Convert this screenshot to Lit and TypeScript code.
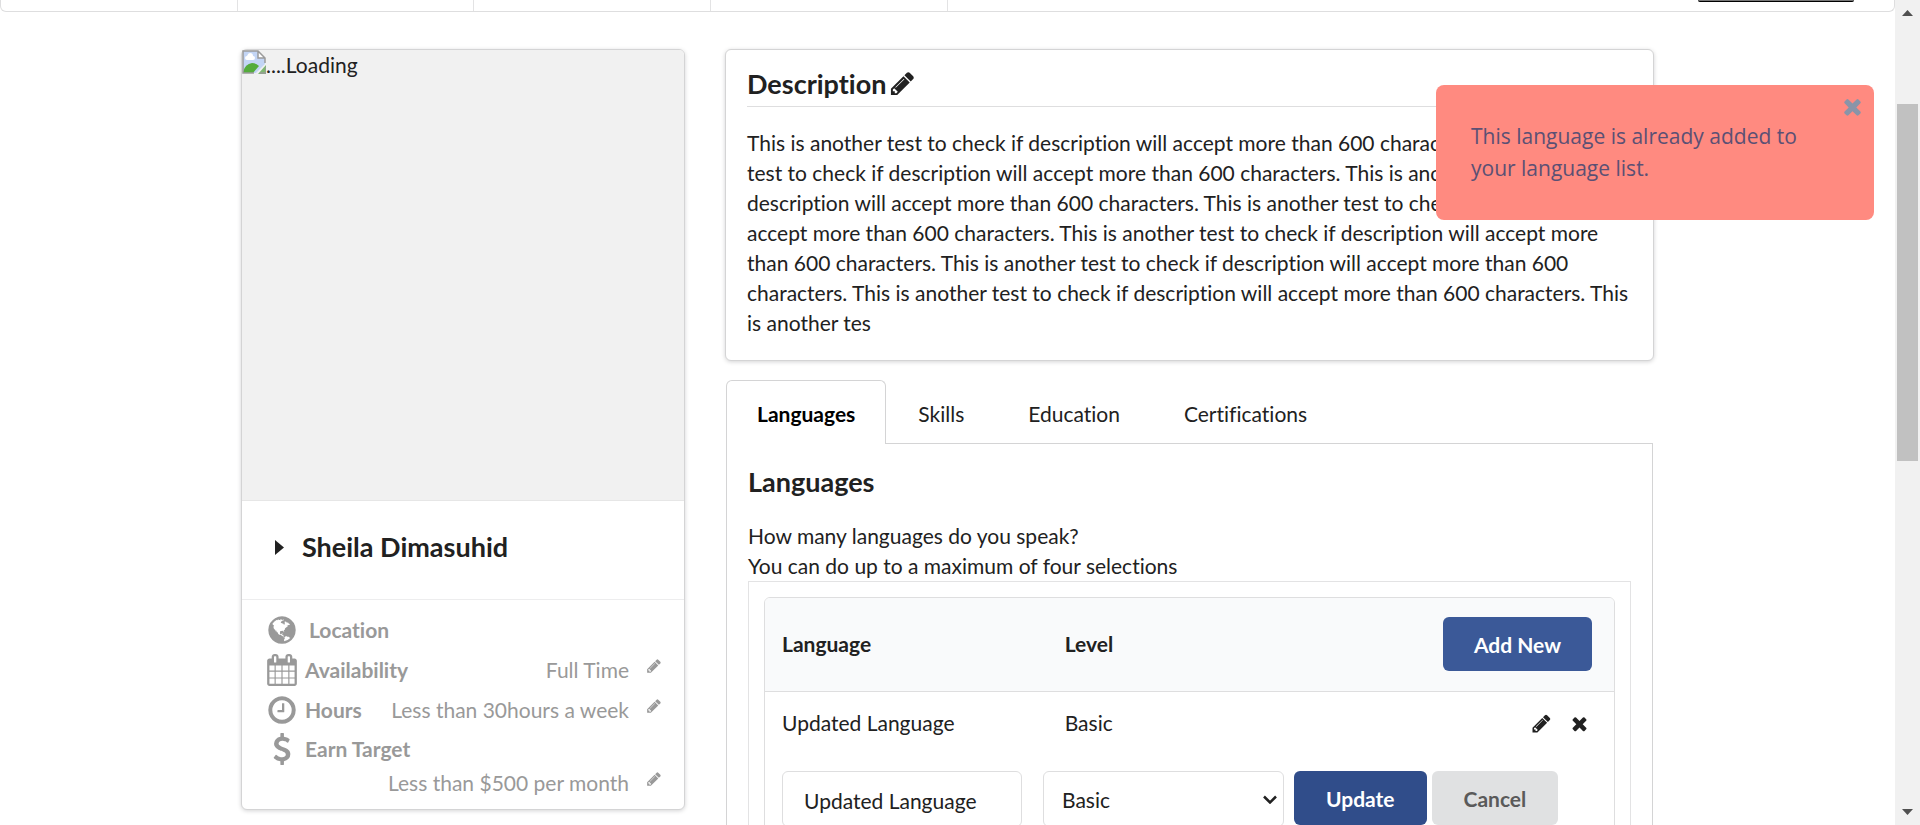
import { LitElement, html, css, svg } from "lit";
import { customElement, property, state } from "lit/decorators.js";
import { classMap } from "lit/directives/class-map.js";

const ICONS: Record<string, string> = {
  pencil:
    "M491 1536l91-91-235-235-91 91v107h128v128h107zm523-928q0-22-22-22-10 0-17 7l-542 542q-7 7-7 17 0 22 22 22 10 0 17-7l542-542q7-7 7-17zm-54-192l416 416-832 832h-416v-416zm683 96q0 53-37 90l-166 166-416-416 166-165q36-38 90-38 53 0 91 38l235 234q37 39 37 91z",
  close:
    "M1490 1322q0 40-28 68l-136 136q-28 28-68 28t-68-28l-294-294-294 294q-28 28-68 28t-68-28l-136-136q-28-28-28-68t28-68l294-294-294-294q-28-28-28-68t28-68l136-136q28-28 68-28t68 28l294 294 294-294q28-28 68-28t68 28l136 136q28 28 28 68t-28 68l-294 294 294 294q28 28 28 68z",
  calendar:
    "M192 1664h288v-288h-288v288zm352 0h320v-288h-320v288zm-352-352h288v-320h-288v320zm352 0h320v-320h-320v320zm-352-384h288v-288h-288v288zm736 736h320v-288h-320v288zm-384-736h320v-288h-320v288zm768 736h288v-288h-288v288zm-384-352h320v-320h-320v320zm-352-864v-288q0-13-9.5-22.5t-22.5-9.5h-64q-13 0-22.5 9.5t-9.5 22.5v288q0 13 9.5 22.5t22.5 9.5h64q13 0 22.5-9.5t9.5-22.5zm736 864h288v-320h-288v320zm-384-384h320v-288h-320v288zm384 0h288v-288h-288v288zm32-480v-288q0-13-9.5-22.5t-22.5-9.5h-64q-13 0-22.5 9.5t-9.5 22.5v288q0 13 9.5 22.5t22.5 9.5h64q13 0 22.5-9.5t9.5-22.5zm384-64v1280q0 52-38 90t-90 38h-1408q-52 0-90-38t-38-90v-1280q0-52 38-90t90-38h128v-96q0-66 47-113t113-47h64q66 0 113 47t47 113v96h384v-96q0-66 47-113t113-47h64q66 0 113 47t47 113v96h128q52 0 90 38t38 90z",
  clock:
    "M1024 544v448q0 14-9 23t-23 9h-320q-14 0-23-9t-9-23v-64q0-14 9-23t23-9h224v-352q0-14 9-23t23-9h64q14 0 23 9t9 23zm416 352q0-148-73-273t-198-198-273-73-273 73-198 198-73 273 73 273 198 198 273 73 273-73 198-198 73-273zm224 0q0 209-103 385.5t-279.5 279.5-385.5 103-385.5-103-279.5-279.5-103-385.5 103-385.5 279.5-279.5 385.5-103 385.5 103 279.5 279.5 103 385.5z",
  dollar:
    "M1362 1185q0 153-99.5 263.5t-258.5 136.5v175q0 14-9 23t-23 9h-135q-13 0-22.5-9.5t-9.5-22.5v-175q-66-9-127.5-31t-101.5-44.5-74-48-46.5-37.5-17.5-18q-17-21-2-41l103-135q7-10 23-12 15-2 24 9l2 2q113 99 243 125 37 8 74 8 81 0 142.5-43t61.5-122q0-28-15-53t-33.5-42-58.5-37.5-66-32-80-32.5q-39-16-61.5-25t-61.5-26.5-62.5-31-56.5-35.5-53.5-42.5-43.5-49-35.5-58-21-66.5-8.5-78q0-138 98-242t255-134v-180q0-13 9.5-22.5t22.5-9.5h135q14 0 23 9t9 23v176q57 6 110.5 23t87 33.5 63.5 37.5 39 29 15 14q17 18 5 38l-81 146q-8 15-23 16-14 3-27-7-3-3-14.5-12t-39-26.5-58.5-32-74.5-26-85.5-11.5q-95 0-155 43t-60 111q0 26 8.5 48t29.5 41.5 39.5 33 56 31 60.5 27 70 27.5q53 20 81 31.5t76 35 75.5 42.5 62 50 53 63.5 31.5 76.5 13 94z",
  globe:
    "M896 128q209 0 385.5 103t279.5 279.5 103 385.5-103 385.5-279.5 279.5-385.5 103-385.5-103-279.5-279.5-103-385.5 103-385.5 279.5-279.5 385.5-103zm274 521q-2 1-9.5 9.5t-13.5 9.5q2 0 4.5-5t5-11 3.5-7q6-7 22-15 14-6 52-12 34-8 51 11-2-2 9.5-13t14.5-12q3-2 15-4.5t15-7.5l2-22q-12 1-17.5-7t-6.5-21q0 2-6 8 0-7-4.5-8t-11.5 1-9 1q-10-3-15-7.5t-8-16.5-4-15q-2-5-9.5-11t-9.5-10q-1-2-2.5-5.5t-3-6.5-4-5.5-5.5-2.5-7 5-7.5 10-4.5 5q-3-2-6-1.5t-4.5 1-4.5 3-5 3.5q-3 2-8.5 3t-8.5 2q15-5-1-11-10-4-16-3 9-4 7.5-12t-8.5-14h5q-1-4-8.5-8.5t-17.5-8.5-13-6q-8-5-34-9.5t-33-.5q-5 6-4.5 10.5t4 14 3.5 12.5q1 6-5.5 13t-6.5 12q0 7 14 15.5t10 21.5q-3 8-16 16t-16 12q-5 8-1.5 18.5t10.5 16.5q2 2 1.5 4t-3.5 4.5-5.5 4-6.5 3.5l-3 2q-11 5-20.5-6t-13.5-26q-7-25-16-30-23-8-29 1-5-13-41-26-25-9-58-4 6-1 0-15-7-15-19-12 3-6 4-17.5t1-13.5q3-13 12-23 1-1 7-8.5t9.5-13.5.5-6q35 4 50-11 5-5 11.5-17t10.5-17q9-6 14-5.5t14.5 5.5 14.5 5q14 1 15.5-11t-7.5-20q12 1 3-17-4-7-8-9-12-4-27 5-8 4 2 8-1-1-9.5 10.5t-16.5 17.5-16-5q-1-1-5.5-13.5t-9.5-13.5q-8 0-16 15 3-8-11-15t-24-8q19-12-8-27-7-4-20.5-5t-19.5 4q-5 7-5.5 11.5t5 8 10.5 5.5 11.5 4 8.500 3q14 10 8 14-2 1-8.5 3.5t-11.5 4.5-6 4q-3 4 0 14t-2 14q-5-5-9-17.5t-7-16.5q7 9-25 6l-10-1q-4 0-16 2t-20.5 1-13.5-8q-4-8 0-20 1-4 4-2-4-3-11-9.5t-10-8.5q-46 15-94 41 6 1 12-1 5-2 13-6.5t10-5.5q34-14 42-7l5-5q14 16 20 25-7-4-30-1-20 6-22 12 7 12 5 18-4-3-11.5-10t-14.5-11-15-5q-16 0-22 1-146 80-235 222 7 7 12 8 4 1 5 9t2.5 11 11.5-3q9 8 3 19 1-1 44 27 19 17 21 21 3 11-10 18-1-2-9-9t-9-4q-3 5 .5 18.5t10.5 12.5q-7 0-9.5 16t-2.5 35.5-1 23.5l2 1q-3 12 5.5 34.5t21.5 19.5q-13 3 20 43 6 8 8 9 3 2 12 7.5t15 10 10 10.5q4 5 10 22.5t14 23.5q-2 6 9.5 20t10.5 23q-1 0-2.5 1t-2.5 1q3 7 15.5 14t15.5 13q1 3 2 10t3 11 8 2q2-20-24-62-15-25-17-29-3-5-5.5-15.5t-4.5-14.5q2 0 6 1.5t8.5 3.5 7.5 4 2 3q-3 7 2 17.5t12 18.5 17 19 12 13q6 6 14 19.5t0 13.5q9 0 20 10.5t17 19.5q5 8 8 26t5 24q2 7 8.5 13.5t12.5 9.5l16 8 13 7q5 2 18.5 10.5t21.5 11.5q10 4 16 4t14.5-2.5 13.5-3.5q15-2 29 15t21 21q36 19 55 11-2 1 .5 7.5t8 15.5 9 14.5 5.5 8.5q5 6 18 15t18 15q6-4 7-9-3 8 7 20t18 10q14-3 14-32-31 15-49-18 0-1-2.5-5.5t-4-8.5-2.5-8.5 0-7.5 5-3q9 0 10-3.5t-2-12.5-4-13q-1-8-11-20t-12-15q-5 9-16 8t-16-9q0 1-1.5 5.5t-1.5 6.5q-13 0-15-1 1-3 2.5-17.5t3.5-22.5q1-4 5.5-12t7.5-14.5 4-12.5-4.5-9.5-17.5-2.5q-19 1-26 20-1 3-3 10.5t-5 11.5-9 7q-7 3-24 2t-24-5q-13-8-22.5-29t-9.5-37q0-10 2.5-26.5t3-25-5.5-24.5q3-2 9-9.5t10-10.5q2-1 4.5-1.5t4.5 0 4-1.5 3-6q-1-1-4-3-3-3-4-3 7 3 28.5-1.5t27.5 1.5q15 11 22-2 0-1-2.5-9.5t-.5-13.5q5 27 29 9 3 3 15.5 5t17.5 5q3 2 7 5.5t5.5 4.5 5-.5 8.5-6.5q10 14 12 24 11 40 19 44 7 3 11 2t4.5-9.5 0-14-1.5-12.5l-1-8v-18l-1-8q-15-3-18.5-12t1.5-18.5 15-18.5q1-1 8-3.5t15.5-6.5 12.5-8q21-19 15-35 7 0 11-9-1 0-5-3t-7.5-5-4.5-2q9-5 2-16 5-3 7.5-11t7.5-10q9 12 21 2 7-8 1-16 5-7 20.5-10.5t18.5-9.5q7 2 8-2t1-12 3-12q4-5 15-9t13-5l17-11q3-4 0-4 18 2 31-11 10-11-6-20 3-6-3-9.5t-15-5.5q3-1 11.5-.5t10.5-1.5q15-10-7-16-17-5-43 12zm-163 877q206-36 351-189-3-3-12.5-4.5t-12.5-3.5q-18-7-24-8 1-7-2.5-13t-8-9-12.5-8-11-7q-2-2-7-6t-7-5.5-7.5-4.5-8.5-2-10 1l-3 1q-3 1-5.5 2.5t-5.5 3-4 3 0 2.5q-21-17-36-22-5-1-11-5.5t-10.5-7-10-1.5-11.5 7q-5 5-6 15t-2 13q-7-5 0-17.5t2-18.5q-3-6-10.5-4.5t-12 4.5-11.5 8.5-9 6.5-8.5 5.5-8.5 7.5q-3 4-6 12t-5 11q-2-4-11.5-6.5t-9.5-5.5q2 10 4 35t5 38q7 31-12 48-27 25-29 40-4 22 12 26 0 7-8 20.5t-7 21.5q0 6 2 16z",
};

@customElement("ui-icon")
class UiIcon extends LitElement {
  @property() name = "pencil";

  static styles = css`
    :host {
      display: block;
      flex: none;
      width: 21px;
      height: 21px;
    }
    svg {
      display: block;
      width: 100%;
      height: 100%;
      fill: currentColor;
    }
  `;

  render() {
    return html`<svg viewBox="0 0 1792 1792" aria-hidden="true">
      ${svg`<path d=${ICONS[this.name]}></path>`}
    </svg>`;
  }
}

const SENTENCE =
  "This is another test to check if description will accept more than 600 characters. ";
const DESCRIPTION = SENTENCE.repeat(7) + "This is another tes";

const FACTS = [
  { icon: "globe", label: "Location", value: "" },
  { icon: "calendar", label: "Availability", value: "Full Time" },
  { icon: "clock", label: "Hours", value: "Less than 30hours a week" },
  { icon: "dollar", label: "Earn Target", value: "Less than $500 per month" },
];

const TABS = ["Languages", "Skills", "Education", "Certifications"];

@customElement("app-root")
class AppRoot extends LitElement {
  @state() private tab = "Languages";
  @state() private toastOpen = true;

  static styles = css`
    :host {
      display: grid;
      grid-template-columns: minmax(0, 1fr) 25px;
      position: relative;
      height: 100vh;
      overflow: hidden;
      background: #fff;
      color: #212121;
      font: 21px/30px Lato, sans-serif;
      font-variant-ligatures: no-common-ligatures;
    }
    * {
      box-sizing: border-box;
    }
    h2,
    h3,
    p,
    dl,
    dd {
      margin: 0;
    }
    button,
    input,
    select {
      font: inherit;
      font-variant-ligatures: inherit;
      color: inherit;
      margin: 0;
    }
    button {
      cursor: pointer;
    }
    .icon-button {
      display: block;
      padding: 0;
      border: 0;
      background: none;
    }
    .page {
      min-width: 0;
      height: 100vh;
      overflow: hidden;
    }

    .topnav {
      display: flex;
      justify-content: space-between;
      height: 12px;
      border: 1px solid #dededf;
      border-top: 0;
      border-radius: 0 0 6px 6px;
    }
    .cells {
      display: grid;
      grid-template-columns: repeat(4, 1fr);
      width: 50%;
    }
    .cell {
      border-right: 1px solid #e3e3e4;
    }
    .outline {
      width: 156px;
      height: 2px;
      margin-right: 40px;
      background: #777;
      border-bottom: 1px solid #000;
      border-radius: 0 0 6px 6px;
    }

    .container {
      display: grid;
      grid-template-columns: minmax(0, 444fr) minmax(0, 929fr);
      align-items: start;
      gap: 40px;
      max-width: 1413px;
      margin: 37px auto 0;
    }
    .card {
      background: #fff;
      border: 1px solid #d4d4d5;
      border-radius: 6px;
      box-shadow: 0 1px 4px #d4d4d5;
    }
    .photo {
      display: flex;
      align-items: flex-start;
      height: 451px;
      background: #f1f1f1;
      border-bottom: 1px solid #e6e6e6;
      border-radius: 5px 5px 0 0;
    }
    .broken {
      flex: none;
      width: 24px;
      height: 24px;
    }
    .name {
      display: flex;
      align-items: center;
      gap: 18px;
      height: 99px;
      padding: 0 33px 6px;
      border-bottom: 1px solid #ededee;
      font-size: 27px;
      font-weight: 700;
    }
    .caret {
      width: 9px;
      height: 15px;
    }
    .facts {
      padding: 10px 22px 11px 24px;
      color: #999;
    }
    .fact {
      display: flex;
      flex-wrap: wrap;
      align-items: center;
      min-height: 40px;
    }
    .fact dt {
      display: flex;
      align-items: center;
      gap: 7px;
      height: 38px;
      font-weight: 700;
    }
    .fact dt ui-icon {
      width: 32px;
      height: 32px;
    }
    .fact.first dt {
      gap: 11px;
    }
    .fact dd {
      display: flex;
      align-items: center;
      gap: 17px;
      margin-left: auto;
    }
    .small {
      width: 16px;
      height: 16px;
    }
    .fact .icon-button {
      padding-bottom: 8px;
    }

    .description {
      padding: 17px 21px 22px;
    }
    .title {
      display: flex;
      align-items: center;
      gap: 3px;
      height: 40px;
      padding-bottom: 6px;
      border-bottom: 1px solid #dededf;
    }
    .title h3,
    .panel h3 {
      font-size: 27px;
      line-height: 34px;
      font-weight: 700;
    }
    .title ui-icon {
      width: 27px;
      height: 27px;
    }
    .description p {
      margin-top: 21px;
    }

    .tabs {
      display: flex;
      margin: 19px 1px 0;
      border-bottom: 1px solid #d4d4d5;
    }
    .tab {
      height: 63px;
      padding: 4px 31px 0;
      border: 1px solid transparent;
      border-bottom: 0;
      background: none;
    }
    .tab.active {
      height: 64px;
      margin-bottom: -1px;
      padding: 2px 30px 0;
      background: #fff;
      border-color: #d4d4d5;
      border-radius: 6px 6px 0 0;
      color: #000;
      font-weight: 700;
    }
    .panel {
      margin: 0 1px;
      padding: 21px;
      border: 1px solid #d4d4d5;
      border-top: 0;
    }
    .panel h3 {
      margin-bottom: 22px;
    }
    .frame {
      border: 1px solid #e3e3e4;
      padding: 15px;
    }
    table {
      width: 100%;
      border: 1px solid #dededf;
      border-radius: 6px;
      border-spacing: 0;
      table-layout: fixed;
    }
    th {
      height: 94px;
      padding: 0 17px 2px;
      background: #f9fafb;
      border-bottom: 1px solid #dededf;
      text-align: left;
      font-weight: 700;
    }
    th:first-child {
      border-radius: 5px 0 0 0;
    }
    th:last-child {
      border-radius: 0 5px 0 0;
      padding-right: 22px;
      text-align: right;
    }
    td {
      height: 64px;
      padding: 0 17px 2px;
    }
    .actions {
      display: flex;
      justify-content: flex-end;
      gap: 17px;
      padding-right: 7px;
    }
    .button {
      height: 54px;
      padding: 2px 31px 0;
      border: 0;
      border-radius: 6px;
      font-weight: 700;
    }
    .add {
      background: #3b5998;
      color: #fff;
    }
    .update {
      margin-left: 10px;
      padding: 2px 32px 0;
      background: #304d8a;
      color: #fff;
    }
    .cancel {
      margin-left: 5px;
      padding: 2px 32px 0;
      background: #e0e1e2;
      color: #5a5a5a;
    }
    .edit {
      padding: 15px 17px;
    }
    .form {
      display: grid;
      grid-template-columns: 240px 262px auto auto 1fr;
      align-items: start;
    }
    .field {
      height: 56px;
      width: 100%;
      border: 1px solid #dededf;
      border-radius: 6px;
      background: #fff;
      outline: 0;
    }
    input.field {
      padding: 2px 21px 0;
    }
    .choice {
      display: grid;
      align-items: center;
      justify-items: end;
      margin-left: 21px;
    }
    .choice > * {
      grid-area: 1 / 1;
    }
    select.field {
      padding: 2px 18px 0;
      appearance: none;
    }
    .chevron {
      width: 14px;
      height: 9px;
      margin-right: 7px;
      pointer-events: none;
    }

    .toast {
      position: absolute;
      top: 85px;
      right: 46px;
      width: 438px;
      padding: 35px 60px 36px 35px;
      border-radius: 8px;
      background: #ff8a80;
      color: #5b5074;
      font: 21px/32px "Open Sans", sans-serif;
    }
    .dismiss {
      position: absolute;
      top: 9px;
      right: 9px;
      color: #8a94a8;
    }
    .dismiss ui-icon {
      width: 25px;
      height: 25px;
    }

    .scrollbar {
      display: flex;
      flex-direction: column;
      align-items: center;
      background: #f1f1f1;
      padding: 10px 2px;
    }
    .scrollbar svg {
      flex: none;
      width: 11px;
      height: 6px;
      fill: #505050;
    }
    .track {
      flex: 1;
      width: 100%;
      padding: 88px 0 0;
    }
    .thumb {
      height: 357px;
      background: #c1c1c1;
    }
  `;

  private pencil(label: string, cls = "") {
    return html`<button class="icon-button" aria-label=${label}>
      <ui-icon class=${cls} name="pencil"></ui-icon>
    </button>`;
  }

  private renderProfile() {
    return html`<section class="card">
      <div class="photo" role="img" aria-label="Profile picture">
        <svg class="broken" viewBox="0 0 24 24" aria-hidden="true">
          <path d="M1 1h15l7 7v6l-9 9H1z" fill="#c3d5f5" />
          <path d="M5 10q-2 0-2-2t2-2q1-3 3-3 3 0 3 3 2 0 2 2t-2 2z" fill="#fff" />
          <path d="M1 22q2-8 9-9 4 0 7 3l-6 7H1z" fill="#54ac3c" />
          <path d="M24 15v9h-8z" fill="#7fb872" />
          <path d="M16 1v7h7z" fill="#fff" />
          <path d="M12 23H1V1h15l7 7v5M16 1v7h7M24 17v6h-6" fill="none" stroke="#9b9b9b" stroke-width="1.5" />
        </svg>
        <span>....Loading</span>
      </div>
      <h2 class="name">
        <svg class="caret" viewBox="0 0 9 15" aria-hidden="true"><path d="M0 0l9 7.500-9 7.500z" fill="#212121" /></svg>
        Sheila Dimasuhid
      </h2>
      <dl class="facts">
        ${FACTS.map(
          (f, i) => html`<div class=${classMap({ fact: true, first: i === 0 })}>
            <dt><ui-icon name=${f.icon}></ui-icon>${f.label}</dt>
            ${f.value
              ? html`<dd>${f.value}${this.pencil(`Edit ${f.label}`, "small")}</dd>`
              : ""}
          </div>`
        )}
      </dl>
    </section>`;
  }

  private renderLanguages() {
    return html`<div class="panel" role="tabpanel">
      <h3>Languages</h3>
      <p>How many languages do you speak?<br />You can do up to a maximum of four selections</p>
      <div class="frame">
        <table>
          <colgroup>
            <col style="width:33.3%" />
            <col style="width:33.3%" />
            <col />
          </colgroup>
          <thead>
            <tr>
              <th>Language</th>
              <th>Level</th>
              <th><button class="button add">Add New</button></th>
            </tr>
          </thead>
          <tbody>
            <tr>
              <td>Updated Language</td>
              <td>Basic</td>
              <td>
                <div class="actions">
                  ${this.pencil("Edit language")}
                  <button class="icon-button" aria-label="Remove language">
                    <ui-icon name="close"></ui-icon>
                  </button>
                </div>
              </td>
            </tr>
            <tr>
              <td class="edit" colspan="3">
                <div class="form">
                  <input class="field" type="text" aria-label="Language" value="Updated Language" />
                  <div class="choice">
                    <select class="field" aria-label="Level">
                      <option selected>Basic</option>
                      <option>Conversational</option>
                      <option>Fluent</option>
                      <option>Native/Bilingual</option>
                    </select>
                    <svg class="chevron" viewBox="0 0 14 9" aria-hidden="true">
                      <path d="M1 1.500l6 6 6-6" fill="none" stroke="#212121" stroke-width="2.500" />
                    </svg>
                  </div>
                  <button class="button update">Update</button>
                  <button class="button cancel">Cancel</button>
                </div>
              </td>
            </tr>
          </tbody>
        </table>
      </div>
    </div>`;
  }

  render() {
    return html`
      <main class="page">
        <nav class="topnav">
          <div class="cells">${[0, 1, 2, 3].map(() => html`<span class="cell"></span>`)}</div>
          <span class="outline"></span>
        </nav>
        <div class="container">
          ${this.renderProfile()}
          <div>
            <section class="card description">
              <div class="title">
                <h3>Description</h3>
                ${this.pencil("Edit description")}
              </div>
              <p>${DESCRIPTION}</p>
            </section>
            <div class="tabs" role="tablist">
              ${TABS.map(
                (t) => html`<button
                  role="tab"
                  class=${classMap({ tab: true, active: t === this.tab })}
                  aria-selected=${t === this.tab}
                  @click=${() => (this.tab = t)}
                >${t}</button>`
              )}
            </div>
            ${this.renderLanguages()}
          </div>
        </div>
      </main>
      <div class="scrollbar" aria-hidden="true">
        <svg viewBox="0 0 11 6"><path d="M0 6l5.500-6L11 6z" /></svg>
        <div class="track"><div class="thumb"></div></div>
        <svg viewBox="0 0 11 6"><path d="M0 0l5.500 6L11 0z" /></svg>
      </div>
      ${this.toastOpen
        ? html`<div class="toast" role="alert">
            This language is already added to your language list.
            <button class="icon-button dismiss" aria-label="Close" @click=${() => (this.toastOpen = false)}>
              <ui-icon name="close"></ui-icon>
            </button>
          </div>`
        : ""}
    `;
  }
}
